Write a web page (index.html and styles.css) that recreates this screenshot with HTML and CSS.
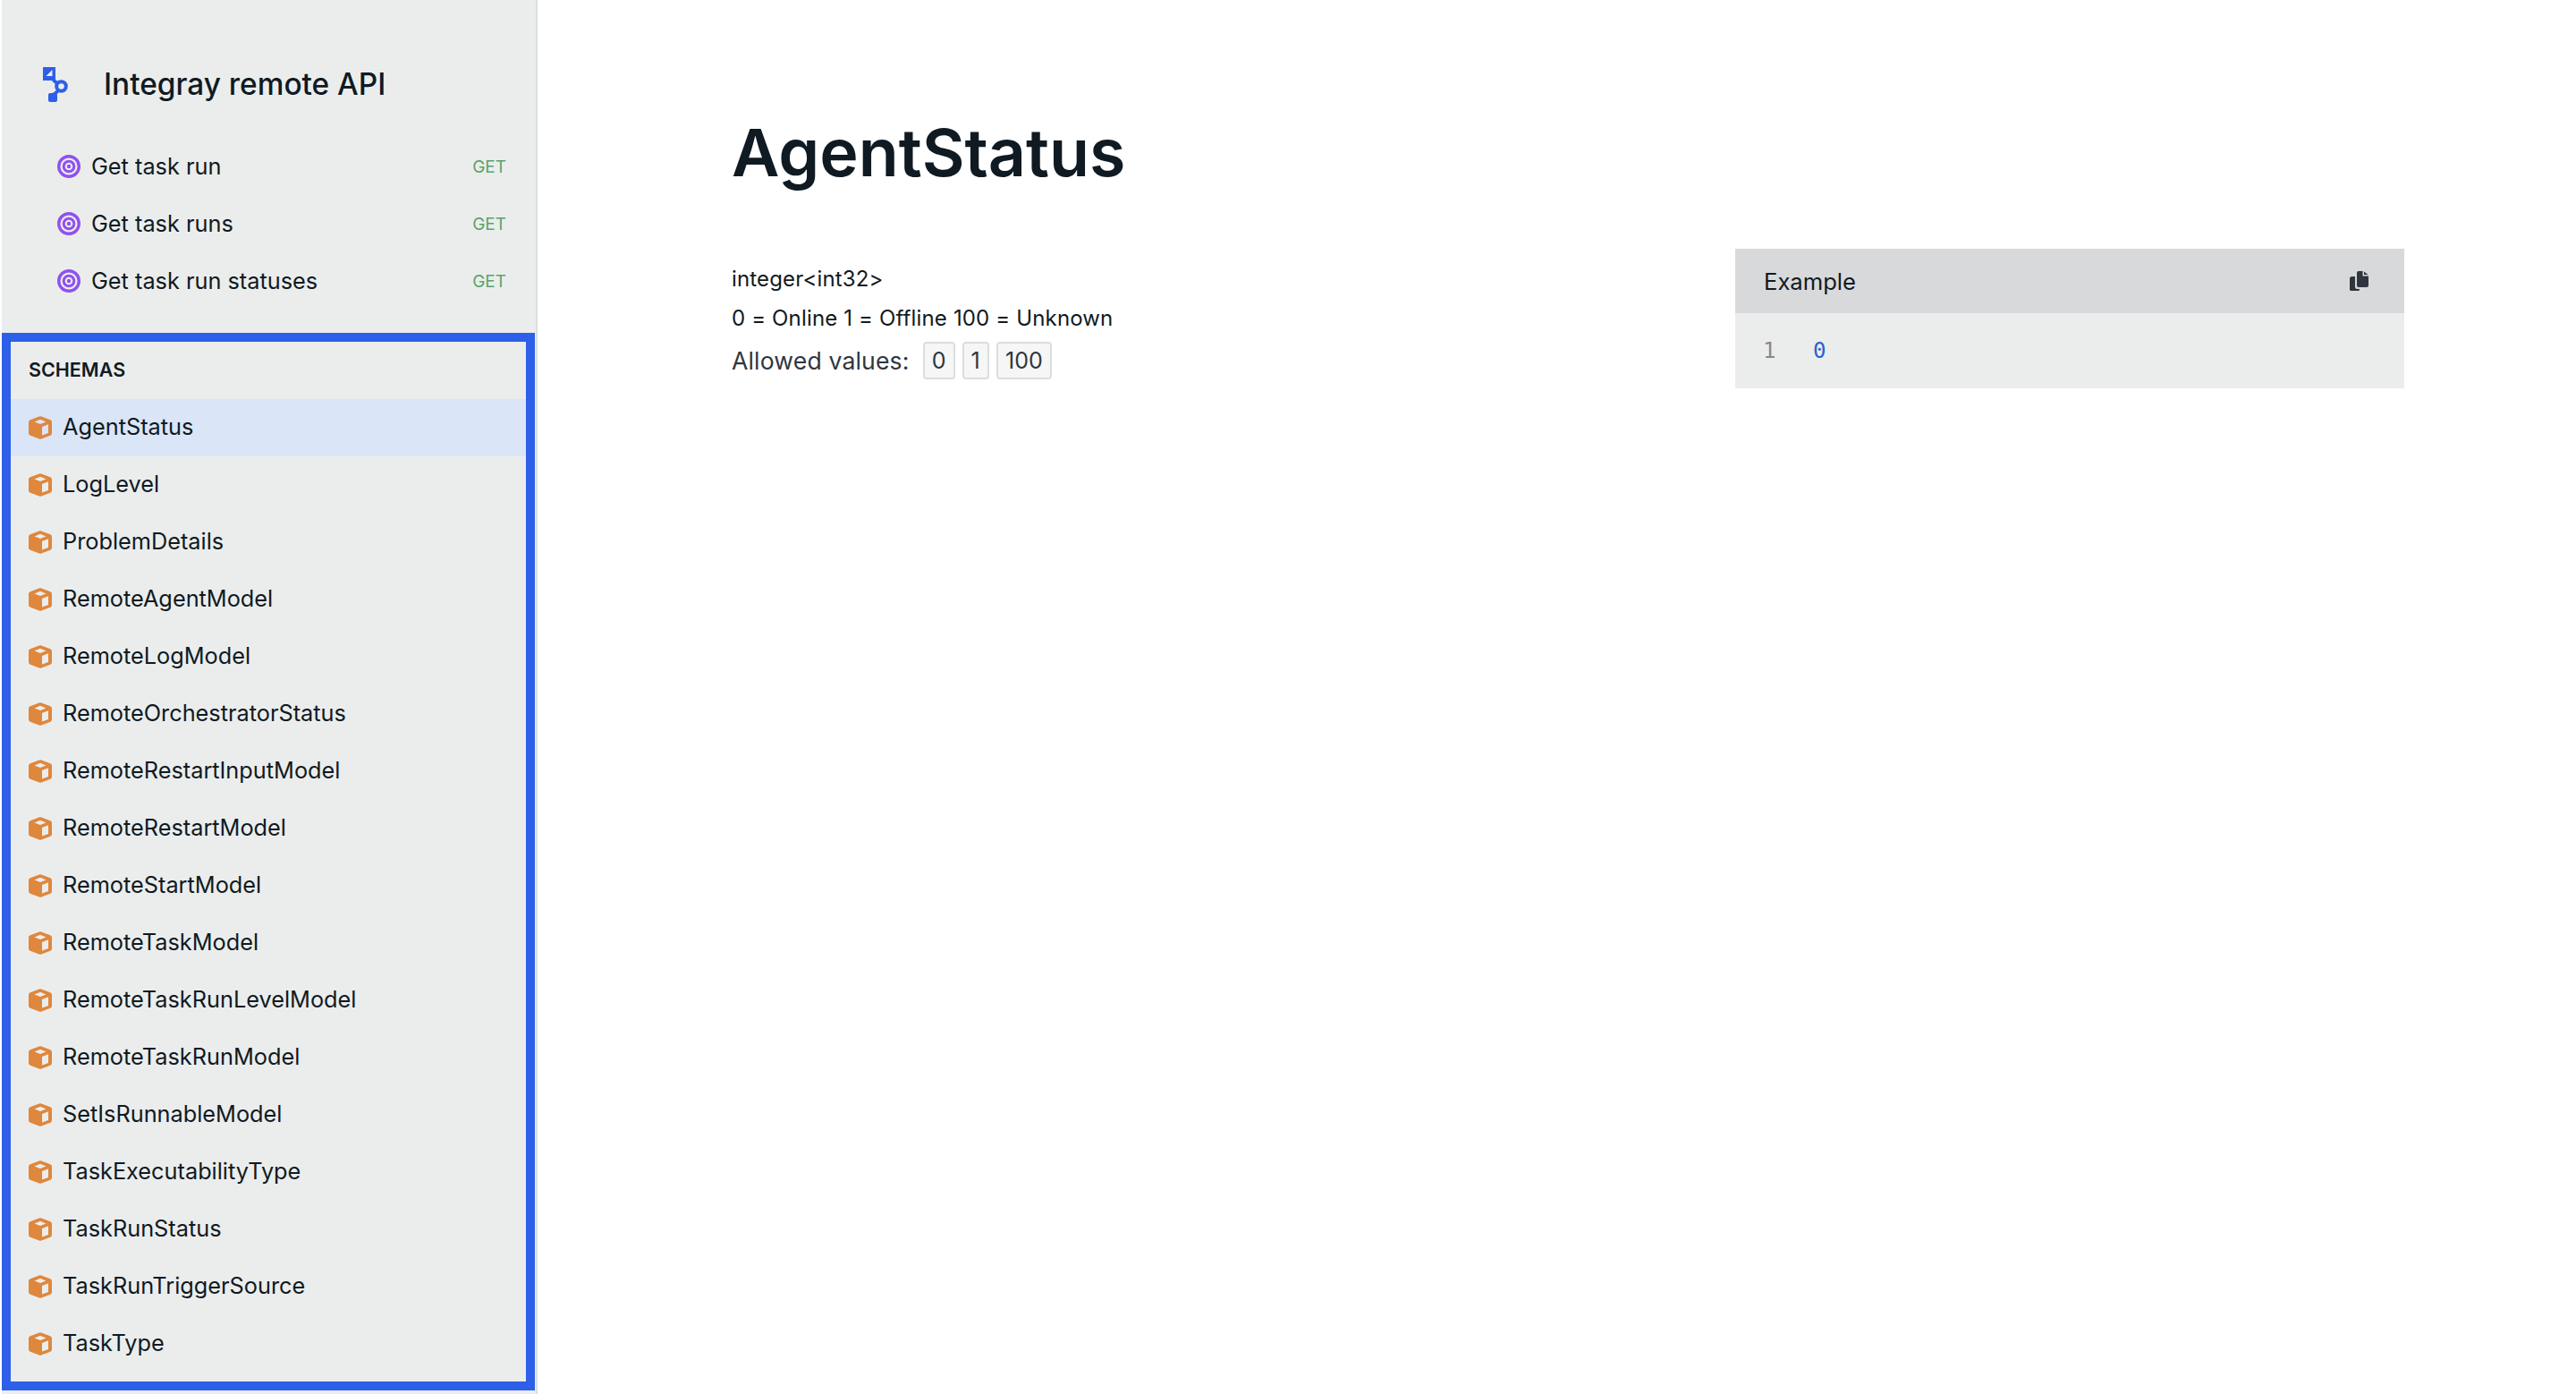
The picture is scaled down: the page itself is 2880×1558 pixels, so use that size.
FILE: index.html
```html
<!DOCTYPE html>
<html lang="en">
<head>
    <meta charset="UTF-8">
    <title>AgentStatus - Integray remote API</title>
    <link rel="stylesheet" href="styles.css">
</head>
<body>
    <svg class="icon-defs" width="0" height="0">
        <symbol id="icon-target" viewBox="0 0 26 26">
            <circle cx="13" cy="13" r="11.3" fill="none" stroke="currentColor" stroke-width="3.4"/>
            <circle cx="13" cy="13" r="5.800" fill="none" stroke="currentColor" stroke-width="3"/>
            <circle cx="13" cy="13" r="2.200" fill="currentColor"/>
        </symbol>
        <symbol id="icon-cube" viewBox="0 0 26 26">
            <path fill="currentColor" fill-rule="evenodd" d="M11.8.4a3 3 0 0 1 2.4 0l10 3.8A2.6 2.6 0 0 1 26 6.7v12.6a2.6 2.6 0 0 1-1.7 2.4l-10 3.9a3 3 0 0 1-2.4 0l-10-3.9A2.6 2.6 0 0 1 0 19.300V6.700a2.600 2.600 0 0 1 1.800-2.500zM13 3.800 6.500 6.400 13 9l6.500-2.600zM15 12v9.600l7-2.700V9.300z"/>
        </symbol>
    </svg>

    <aside class="sidebar">
        <div class="brand">
            <svg class="brand-logo" width="30" height="40" viewBox="0 0 30 40">
                <path fill="#2e5fe8" fill-rule="evenodd" d="M2 1h14v15H2zM12.500 4 5.500 11h7z"/>
                <circle cx="22.500" cy="22.500" r="5.300" fill="none" stroke="#2e5fe8" stroke-width="4"/>
                <path fill="none" stroke="#2e5fe8" stroke-width="4" d="M12 13c2 3 4 5 6 6M19 27c-2 3-5 5-9 6"/>
                <rect x="8" y="30" width="10" height="10" rx="2" fill="#2e5fe8"/>
            </svg>
            <span class="brand-name">Integray remote API</span>
        </div>

        <ul class="endpoints">
            <li class="endpoint">
                <svg class="icon-target" width="26" height="26"><use href="#icon-target"/></svg>
                <span class="endpoint-name">Get task run</span>
                <span class="endpoint-method">GET</span>
            </li>
            <li class="endpoint">
                <svg class="icon-target" width="26" height="26"><use href="#icon-target"/></svg>
                <span class="endpoint-name">Get task runs</span>
                <span class="endpoint-method">GET</span>
            </li>
            <li class="endpoint">
                <svg class="icon-target" width="26" height="26"><use href="#icon-target"/></svg>
                <span class="endpoint-name">Get task run statuses</span>
                <span class="endpoint-method">GET</span>
            </li>
        </ul>

        <section class="schemas">
            <h2 class="schemas-title">SCHEMAS</h2>
            <ul class="schema-list">
                <li class="schema active"><svg class="icon-cube" width="26" height="26"><use href="#icon-cube"/></svg><span class="schema-name">AgentStatus</span></li>
                <li class="schema"><svg class="icon-cube" width="26" height="26"><use href="#icon-cube"/></svg><span class="schema-name">LogLevel</span></li>
                <li class="schema"><svg class="icon-cube" width="26" height="26"><use href="#icon-cube"/></svg><span class="schema-name">ProblemDetails</span></li>
                <li class="schema"><svg class="icon-cube" width="26" height="26"><use href="#icon-cube"/></svg><span class="schema-name">RemoteAgentModel</span></li>
                <li class="schema"><svg class="icon-cube" width="26" height="26"><use href="#icon-cube"/></svg><span class="schema-name">RemoteLogModel</span></li>
                <li class="schema"><svg class="icon-cube" width="26" height="26"><use href="#icon-cube"/></svg><span class="schema-name">RemoteOrchestratorStatus</span></li>
                <li class="schema"><svg class="icon-cube" width="26" height="26"><use href="#icon-cube"/></svg><span class="schema-name">RemoteRestartInputModel</span></li>
                <li class="schema"><svg class="icon-cube" width="26" height="26"><use href="#icon-cube"/></svg><span class="schema-name">RemoteRestartModel</span></li>
                <li class="schema"><svg class="icon-cube" width="26" height="26"><use href="#icon-cube"/></svg><span class="schema-name">RemoteStartModel</span></li>
                <li class="schema"><svg class="icon-cube" width="26" height="26"><use href="#icon-cube"/></svg><span class="schema-name">RemoteTaskModel</span></li>
                <li class="schema"><svg class="icon-cube" width="26" height="26"><use href="#icon-cube"/></svg><span class="schema-name">RemoteTaskRunLevelModel</span></li>
                <li class="schema"><svg class="icon-cube" width="26" height="26"><use href="#icon-cube"/></svg><span class="schema-name">RemoteTaskRunModel</span></li>
                <li class="schema"><svg class="icon-cube" width="26" height="26"><use href="#icon-cube"/></svg><span class="schema-name">SetIsRunnableModel</span></li>
                <li class="schema"><svg class="icon-cube" width="26" height="26"><use href="#icon-cube"/></svg><span class="schema-name">TaskExecutabilityType</span></li>
                <li class="schema"><svg class="icon-cube" width="26" height="26"><use href="#icon-cube"/></svg><span class="schema-name">TaskRunStatus</span></li>
                <li class="schema"><svg class="icon-cube" width="26" height="26"><use href="#icon-cube"/></svg><span class="schema-name">TaskRunTriggerSource</span></li>
                <li class="schema"><svg class="icon-cube" width="26" height="26"><use href="#icon-cube"/></svg><span class="schema-name">TaskType</span></li>
            </ul>
        </section>
    </aside>

    <main class="content">
        <h1 class="page-title">AgentStatus</h1>
        <div class="columns">
            <div class="details">
                <p class="type">integer&lt;int32&gt;</p>
                <p class="description">0 = Online 1 = Offline 100 = Unknown</p>
                <div class="allowed">
                    <span class="allowed-label">Allowed values:</span>
                    <span class="chip">0</span>
                    <span class="chip">1</span>
                    <span class="chip">100</span>
                </div>
            </div>
            <div class="example">
                <div class="example-head">
                    <span>Example</span>
                    <svg class="icon-copy" width="22" height="22" viewBox="0 0 22 22">
                        <path fill="#2f3640" d="M1 8.500A2.500 2.500 0 0 1 3.500 6H7v11.500A2.500 2.500 0 0 0 9.500 20H12v.5a1.500 1.500 0 0 1-1.500 1.500h-8A1.500 1.500 0 0 1 1 20.500z"/>
                        <path fill="#2f3640" d="M9 2a2 2 0 0 1 2-2h4.500v5.500H22V16a2 2 0 0 1-2 2h-9a2 2 0 0 1-2-2zM17 .5 21.500 4H17z"/>
                    </svg>
                </div>
                <div class="example-body">
                    <span class="line-number">1</span>
                    <span class="code-number">0</span>
                </div>
            </div>
        </div>
    </main>
</body>
</html>
```

FILE: styles.css
```css
* {
    box-sizing: border-box;
}

html, body {
    height: 100%;
}

body {
    display: flex;
    margin: 0;
    background-color: #fff;
    color: #101a22;
    font-family: Inter, "Liberation Sans", sans-serif;
    font-size: 24px;
    overflow: hidden;
}

ul {
    list-style: none;
    margin: 0;
    padding: 0;
}

.icon-defs {
    position: absolute;
}

.sidebar {
    display: flex;
    flex-direction: column;
    flex: none;
    width: 597px;
    height: 1558px;
    margin-left: 2px;
    background-color: #ebeded;
    box-shadow: 2px 0 0 #dcdddd;
    font-size: 25.3px;
}

.brand {
    display: flex;
    align-items: center;
    height: 62px;
    margin-top: 63px;
    padding-left: 44px;
}

.brand-logo {
    flex: none;
    margin-right: 40px;
}

.brand-name {
    font-size: 33.4px;
    font-weight: 500;
}

.endpoints {
    margin-top: 29px;
}

.endpoint {
    display: flex;
    align-items: center;
    height: 64px;
    padding: 0 33px 0 62px;
}

.icon-target {
    flex: none;
    margin-right: 12px;
    color: #9150f0;
}

.endpoint-name {
    flex: 1;
    padding-bottom: 2px;
}

.endpoint-method {
    color: #5aa469;
    font-size: 19px;
}

.schemas {
    width: 596px;
    height: 1182px;
    margin-top: 26px;
    border: 10px solid #2e5fe8;
}

.schemas-title {
    display: flex;
    align-items: center;
    height: 62px;
    margin: 0 0 2px;
    padding-left: 20px;
    font-size: 21.5px;
    font-weight: 600;
}

.schema {
    display: flex;
    align-items: center;
    height: 64px;
    padding-left: 20px;
}

.schema-name {
    padding-bottom: 3px;
}

.schema.active {
    background-color: #dae5f8;
}

.icon-cube {
    flex: none;
    margin-right: 12px;
    color: #df873c;
}

.content {
    flex: 1;
    padding-left: 219px;
}

.page-title {
    margin: 126px 0 0;
    font-size: 73.5px;
    font-weight: 600;
    line-height: 90px;
}

.columns {
    display: flex;
    margin-top: 62px;
}

.details {
    width: 1122px;
    padding-top: 12px;
    letter-spacing: 0.15px;
}

.type, .description {
    margin: 0;
    line-height: 44px;
}

.allowed {
    display: flex;
    align-items: center;
    gap: 8px;
    margin-top: 4px;
    color: #2f3640;
    font-size: 26.6px;
}

.allowed-label {
    margin-right: 7px;
}

.chip {
    padding: 0 8px;
    height: 42px;
    font-size: 25px;
    line-height: 38px;
    background-color: #f6f6f6;
    border: 2px solid #dcdddd;
    border-radius: 4px;
}

.example {
    width: 748px;
    height: 156px;
    font-size: 25.6px;
}

.example-head {
    display: flex;
    align-items: center;
    justify-content: space-between;
    height: 72px;
    padding: 0 40px 0 32px;
    background-color: #d8d9db;
}

.example-body {
    display: flex;
    align-items: center;
    height: 84px;
    padding-left: 31px;
    background-color: #ebeded;
    font-family: "DejaVu Sans Mono", monospace;
    font-size: 24px;
}

.line-number {
    width: 56px;
    color: #85888c;
}

.code-number {
    color: #2a62cf;
}
```
